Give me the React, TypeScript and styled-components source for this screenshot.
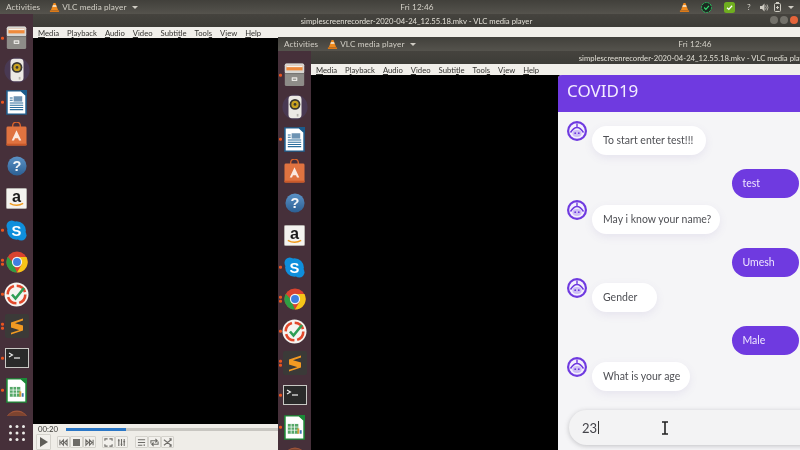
import React from "react";
import styled, { createGlobalStyle } from "styled-components";

const Global = createGlobalStyle`
  html, body { margin: 0; padding: 0; background: #000; overflow: hidden; }
  * { box-sizing: border-box; }
`;

const Frame = styled.div`
  position: relative;
  width: 800px;
  height: 450px;
  overflow: hidden;
  filter: blur(0.3px);
`;

const Screen = styled.div<{ $h: number }>`
  width: 800px;
  height: ${(p) => p.$h}px;
  display: flex;
  flex-direction: column;
  overflow: hidden;
  font-family: Lato, "Noto Sans", sans-serif;
  background: #000;
`;

const NestedSlot = styled.div`
  position: absolute;
  left: 278px;
  top: 37px;
`;

const TopBar = styled.div`
  flex: none;
  height: 14px;
  display: grid;
  grid-template-columns: 1fr auto 1fr;
  align-items: center;
  background: linear-gradient(#41403b, #55534d);
  color: #d2cfc6;
  font-size: 8.2px;
  letter-spacing: 0.1px;
`;

const TopLeft = styled.div`
  display: flex;
  align-items: center;
  padding-left: 6px;
`;

const AppMenu = styled.div`
  display: flex;
  align-items: center;
  gap: 2px;
  margin-left: 9px;
`;

const Caret = styled.span`
  width: 0;
  height: 0;
  margin-left: 3px;
  border-left: 3px solid transparent;
  border-right: 3px solid transparent;
  border-top: 3px solid #cfccc3;
`;

const Clock = styled.div`
  margin-left: 34px;
`;

const Tray = styled.div`
  display: flex;
  align-items: center;
  justify-content: flex-end;
  padding-right: 5px;
`;

const TraySlot = styled.span<{ $w: number }>`
  width: ${(p) => p.$w}px;
  display: flex;
  justify-content: center;
  align-items: center;
`;

const Body = styled.div`
  flex: 1;
  min-height: 0;
  display: flex;
`;

const Dock = styled.div`
  flex: none;
  width: 33px;
  position: relative;
  display: flex;
  flex-direction: column;
  align-items: center;
  padding-top: 8px;
  background: #46303a;
  overflow: hidden;
`;

const DockItem = styled.div`
  flex: none;
  position: relative;
  width: 33px;
  height: 32px;
  display: flex;
  align-items: center;
  justify-content: center;
`;

const Pips = styled.div`
  position: absolute;
  left: 1px;
  top: 50%;
  transform: translateY(-50%);
  display: flex;
  flex-direction: column;
  gap: 1.5px;
`;

const Pip = styled.span`
  width: 2.5px;
  height: 2.5px;
  border-radius: 50%;
  background: #e9541f;
`;

const AppsButton = styled.div`
  position: absolute;
  left: 0;
  bottom: 0;
  width: 33px;
  height: 34px;
  display: flex;
  align-items: center;
  justify-content: center;
  background: #46303a;
`;

const Window = styled.div`
  flex: 1;
  min-width: 0;
  display: flex;
  flex-direction: column;
`;

const TitleBar = styled.div`
  flex: none;
  position: relative;
  height: 13px;
  display: flex;
  align-items: center;
  justify-content: center;
  background: linear-gradient(#45433e, #3d3c37);
  color: #e2dfd6;
  font-size: 7.7px;
  white-space: nowrap;
`;

const WinButtons = styled.div`
  position: absolute;
  right: 2px;
  top: 2px;
  display: flex;
  gap: 2px;
`;

const WinButton = styled.span<{ $close?: boolean }>`
  width: 8px;
  height: 8px;
  border-radius: 50%;
  background: ${(p) => (p.$close ? "#e5643a" : "#73716a")};
`;

const MenuBar = styled.div`
  flex: none;
  height: 11px;
  padding: 1px 0 0 5px;
  display: flex;
  align-items: center;
  gap: 8px;
  background: #f1efea;
  color: #33322f;
  font-size: 7.7px;
  line-height: 10px;
`;

const MenuLabel = styled.span`
  white-space: nowrap;
`;

const Content = styled.div`
  flex: 1;
  min-height: 0;
  display: flex;
`;

const OuterVideo = styled.div`
  flex: 1;
  display: flex;
  flex-direction: column;
`;

const Video = styled.div<{ $w?: number }>`
  flex: ${(p) => (p.$w ? `none` : 1)};
  width: ${(p) => (p.$w ? `${p.$w}px` : "auto")};
  background: #000;
`;

const Controls = styled.div`
  flex: none;
  height: 26px;
  background: #efede8;
  color: #3a3936;
`;

const SeekRow = styled.div`
  height: 10px;
  display: flex;
  align-items: center;
  padding-left: 5px;
  font-size: 7.8px;
`;

const Seek = styled.div`
  flex: 1;
  height: 3px;
  margin-left: 8px;
  background: #c8c6c1;
`;

const SeekFill = styled.div`
  width: 60px;
  height: 100%;
  background: #2a76c6;
`;

const ButtonRow = styled.div`
  height: 16px;
  display: flex;
  align-items: center;
  padding-left: 3px;
`;

const CtlGroup = styled.div<{ $gap: number }>`
  display: flex;
  margin-left: ${(p) => p.$gap}px;
`;

const CtlButton = styled.div<{ $w?: number }>`
  width: ${(p) => p.$w ?? 13}px;
  height: ${(p) => (p.$w ? 16 : 12)}px;
  display: flex;
  align-items: center;
  justify-content: center;
  background: #f2f0ec;
  border: 1px solid #d4d2cc;
  border-radius: 1px;
`;

const Chat = styled.div`
  flex: none;
  width: 242px;
  display: flex;
  flex-direction: column;
  margin-left: 1px;
  background: #f5f5f7;
  border-top-left-radius: 4px;
  overflow: hidden;
`;

const ChatHeader = styled.div`
  flex: none;
  height: 37px;
  display: flex;
  align-items: center;
  padding: 0 0 6px 9px;
  background: #6f3ae0;
  color: #f3ecff;
  font-family: "Noto Sans", sans-serif;
  font-size: 17px;
`;

const Messages = styled.div`
  flex: 1;
  display: flex;
  flex-direction: column;
  padding: 7.75px 1.5px 0 9px;
`;

const BotRow = styled.div`
  display: flex;
  align-items: flex-start;
  margin-top: 1.25px;
`;

const BotBubble = styled.div<{ $w: number }>`
  width: ${(p) => p.$w}px;
  height: 29px;
  margin-top: 5px;
  margin-left: 5px;
  display: flex;
  align-items: center;
  padding: 0 0 1px 11px;
  border-radius: 15px;
  background: #fff;
  color: #4f5055;
  font-size: 10.5px;
  box-shadow: 0 3px 8px rgba(110, 90, 170, 0.1);
  white-space: nowrap;
`;

const UserBubble = styled.div`
  align-self: flex-end;
  width: 67px;
  height: 29px;
  margin-top: 14.25px;
  display: flex;
  align-items: center;
  padding: 0 0 1px 11px;
  border-radius: 15px;
  background: #6f3ae0;
  color: #efe6ff;
  font-size: 10.5px;
`;

const InputBar = styled.div`
  flex: none;
  position: relative;
  height: 35px;
  margin: 0 -30px 5px 11px;
  display: flex;
  align-items: center;
  padding-left: 13px;
  border-radius: 18px;
  background: #f3f3f4;
  box-shadow: 0 1px 5px rgba(60, 60, 70, 0.28);
  color: #44444a;
  font-size: 13px;
`;

const Caretline = styled.span`
  width: 1px;
  height: 13px;
  margin-left: 1px;
  background: #333;
`;

const IBeam = styled.svg`
  position: absolute;
  left: 92px;
  top: 10.5px;
`;

/* ---------- drawings ---------- */

const Cone = ({ s = 11 }: { s?: number }) => (
  <svg width={s} height={s} viewBox="0 0 12 12">
    <path d="M5 1h2l3 8H2z" fill="#f08a1d" />
    <path d="M4.3 3.6h3.4l.6 1.7H3.7z" fill="#f5f0e8" />
    <path d="M1 9.2h10v1.6H1z" fill="#ee7f12" />
  </svg>
);

const Files = () => (
  <svg width="21" height="24" viewBox="0 0 26 26" preserveAspectRatio="none">
    <rect x="1" y="0.5" width="24" height="24.5" rx="2" fill="#8e8c88" />
    <rect x="1" y="0.5" width="24" height="11" rx="2" fill="#d8d6d2" />
    <rect x="3" y="3" width="20" height="5" fill="#ee8a3c" />
    <rect x="3" y="3" width="20" height="1.5" fill="#f7f3ea" />
    <rect x="1" y="11" width="24" height="1" fill="#6d6b68" />
    <rect x="9.5" y="15.5" width="7" height="4" rx="0.5" fill="#e8e6e2" />
    <rect x="11" y="17" width="4" height="1" fill="#77756f" />
  </svg>
);

const Rhythmbox = () => (
  <svg width="26" height="26" viewBox="0 0 30 30">
    <circle cx="15" cy="15" r="14.5" fill="#4d4168" opacity="0.55" />
    <rect x="7.5" y="2" width="15" height="26" rx="4" fill="#ece9e4" />
    <circle cx="15" cy="12" r="6.2" fill="#3a3833" />
    <circle cx="15" cy="12" r="4.2" fill="#c9a21f" />
    <circle cx="15" cy="12" r="1.6" fill="#3a3833" />
    <rect x="17" y="23" width="2" height="3" fill="#b5b2ac" />
  </svg>
);

const Writer = () => (
  <svg width="21" height="25" viewBox="0 0 22 28" preserveAspectRatio="none">
    <path d="M1 1h15l5 5v21H1z" fill="#fff" stroke="#1f5f8f" strokeWidth="1.6" />
    <path d="M15 0l7 7V0z" fill="#1b5b8b" />
    <rect x="8" y="7" width="9" height="6" fill="#6d93b3" />
    <path d="M4 9h3M4 11.5h3M4 14.5h14M4 17h14M4 19.5h14M4 22h14" stroke="#2a6d9c" strokeWidth="1.2" />
  </svg>
);

const Software = () => (
  <svg width="21" height="24" viewBox="0 0 22 26" preserveAspectRatio="none">
    <path d="M7 6V4a4 4 0 0 1 8 0v2" fill="none" stroke="#d9622a" strokeWidth="1.5" />
    <rect x="0.5" y="5" width="21" height="20.5" rx="1.5" fill="#e07340" />
    <path d="M11 9l5 11h-2.4L12.6 17.5H9.4L8.4 20H6z" fill="#fbe9df" />
    <rect x="0.5" y="23.5" width="21" height="2" fill="#c9592a" />
  </svg>
);

const Help = () => (
  <svg width="20" height="20" viewBox="0 0 22 22">
    <defs>
      <linearGradient id="hg" x1="0" y1="0" x2="0" y2="1">
        <stop offset="0" stopColor="#5b92c6" />
        <stop offset="1" stopColor="#2c5f93" />
      </linearGradient>
    </defs>
    <circle cx="11" cy="11" r="10.5" fill="url(#hg)" />
    <text x="11" y="16.5" textAnchor="middle" fontFamily="Liberation Sans, sans-serif" fontSize="16" fontWeight="700" fill="#f4f6f8">?</text>
  </svg>
);

const Amazon = () => (
  <svg width="21" height="21" viewBox="0 0 22 22">
    <rect x="0.5" y="0.5" width="21" height="21" rx="1" fill="#f4f3ef" stroke="#b7b5b0" />
    <text x="11" y="14.5" textAnchor="middle" fontFamily="Liberation Sans, sans-serif" fontSize="17" fontWeight="700" fill="#1a1a1a">a</text>
    <path d="M4 16q7 4.2 14 .2" fill="none" stroke="#ee9a1d" strokeWidth="1.5" />
  </svg>
);

const Skype = () => (
  <svg width="21" height="21" viewBox="0 0 22 22">
    <circle cx="6" cy="6" r="5.5" fill="#0f8fdc" />
    <circle cx="16" cy="16" r="5.5" fill="#0f8fdc" />
    <circle cx="11" cy="11" r="9.8" fill="#0f8fdc" />
    <text x="11" y="16.5" textAnchor="middle" fontFamily="Liberation Sans, sans-serif" fontSize="15.5" fontWeight="700" fill="#fff">S</text>
  </svg>
);

const Chrome = () => (
  <svg width="22" height="22" viewBox="0 0 24 24">
    <circle cx="12" cy="12" r="11.5" fill="#d9432f" />
    <path d="M2 17.8A11.5 11.5 0 0 1 2 6.2L7 12l5 11.5A11.5 11.5 0 0 1 2 17.8z" fill="#2f9e44" />
    <path d="M12 6.5h10.3A11.5 11.5 0 0 1 12 23.5l5-8.5z" fill="#f5c518" />
    <circle cx="12" cy="12" r="5.6" fill="#f4f4f4" />
    <circle cx="12" cy="12" r="4.3" fill="#3f7fe0" />
  </svg>
);

const CheckApp = () => (
  <svg width="25" height="25" viewBox="0 0 25 25">
    <circle cx="12.5" cy="12.5" r="12" fill="#f6f4f0" />
    <circle cx="12.5" cy="12.5" r="8.8" fill="none" stroke="#e2492c" strokeWidth="2.6" strokeDasharray="11 2.8" />
    <path d="M8 12.5l3.5 4L20 6" fill="none" stroke="#2f9e54" strokeWidth="2.6" />
  </svg>
);

const Sublime = () => (
  <svg width="24" height="24" viewBox="0 0 24 24">
    <rect width="24" height="24" rx="2" fill="#3b3a38" />
    <path d="M18 4.5L6 8.5v5L14 16v.2L6 18.8v1.7L18 16.5v-5L10 9.2 18 6.5z" fill="#f29a22" />
  </svg>
);

const Terminal = () => (
  <svg width="24" height="20" viewBox="0 0 24 20">
    <rect x="0.5" y="0.5" width="23" height="19" fill="#2a2a2a" stroke="#c9c8c4" />
    <path d="M4 5l3.5 2L4 9" fill="none" stroke="#f1f1f1" strokeWidth="1.1" />
    <path d="M9 10h6" stroke="#f1f1f1" strokeWidth="1.2" />
  </svg>
);

const Calc = () => (
  <svg width="21" height="25" viewBox="0 0 22 28" preserveAspectRatio="none">
    <path d="M1 1h15l5 5v21H1z" fill="#fff" stroke="#1d8a36" strokeWidth="1.6" />
    <path d="M15 0l7 7V0z" fill="#1b8a38" />
    <rect x="4" y="10" width="11" height="11" fill="#55a868" />
    <path d="M4 13.5h11M4 17h11M7.5 10v11M11 10v11" stroke="#fff" strokeWidth="0.8" />
    <rect x="14" y="15" width="2" height="6" fill="#d9a13a" />
    <rect x="16.5" y="17" width="2" height="4" fill="#3d76b5" />
  </svg>
);

const Brown = () => (
  <svg width="24" height="24" viewBox="0 0 24 24">
    <circle cx="12" cy="12" r="11.5" fill="#a0553a" />
    <path d="M1 9a12 12 0 0 1 22 0z" fill="#7d4430" />
  </svg>
);

const AppsGrid = () => (
  <svg width="16" height="16" viewBox="0 0 16 16" fill="#ecebe8">
    {[1.5, 8, 14.5].map((y) =>
      [1.5, 8, 14.5].map((x) => <circle key={`${x}-${y}`} cx={x} cy={y} r="1.5" />)
    )}
  </svg>
);

const Avatar = () => (
  <svg width="20" height="20" viewBox="0 0 20 20">
    <circle cx="10" cy="10" r="10" fill="#6f3ae0" />
    <circle cx="10" cy="10" r="7.8" fill="#f4f0fd" />
    <path d="M10 2.5v3.5M3.5 11.5Q10 1.5 16.5 11.5" stroke="#6f3ae0" strokeWidth="1.4" fill="none" />
    <ellipse cx="10" cy="12.5" rx="4.6" ry="3.4" fill="#cdbdf5" />
    <circle cx="8.2" cy="12.2" r="0.9" fill="#6f3ae0" />
    <circle cx="11.8" cy="12.2" r="0.9" fill="#6f3ae0" />
  </svg>
);

const Ic = ({ d, w = 9 }: { d: string; w?: number }) => (
  <svg width={w} height={w} viewBox="0 0 10 10" fill="none" stroke="#6d6b67" strokeWidth="1.2">
    <path d={d} />
  </svg>
);

/* ---------- data ---------- */

const dockIcons: { node: React.ReactNode; pips: number }[] = [
  { node: <Files />, pips: 1 },
  { node: <Rhythmbox />, pips: 0 },
  { node: <Writer />, pips: 1 },
  { node: <Software />, pips: 0 },
  { node: <Help />, pips: 0 },
  { node: <Amazon />, pips: 0 },
  { node: <Skype />, pips: 1 },
  { node: <Chrome />, pips: 2 },
  { node: <CheckApp />, pips: 1 },
  { node: <Sublime />, pips: 2 },
  { node: <Terminal />, pips: 1 },
  { node: <Calc />, pips: 1 },
  { node: <Brown />, pips: 0 },
];

const menus: [string, string, string][] = [
  ["", "M", "edia"],
  ["P", "l", "ayback"],
  ["", "A", "udio"],
  ["", "V", "ideo"],
  ["Subti", "t", "le"],
  ["Tool", "s", ""],
  ["V", "i", "ew"],
  ["", "H", "elp"],
];

const TITLE = "simplescreenrecorder-2020-04-24_12.55.18.mkv - VLC media player";

/* ---------- composed parts ---------- */

const Desktop = ({ h, showApps, tray, winButtons, children }: {
  h: number;
  showApps?: boolean;
  tray?: boolean;
  winButtons?: boolean;
  children: React.ReactNode;
}) => (
  <Screen $h={h}>
    <TopBar>
      <TopLeft>
        <span>Activities</span>
        <AppMenu>
          <Cone />
          <span>VLC media player</span>
          <Caret />
        </AppMenu>
      </TopLeft>
      <Clock>Fri 12:46</Clock>
      {tray ? (
        <Tray>
          <TraySlot $w={22}><Cone /></TraySlot>
          <TraySlot $w={23}>
            <svg width="11" height="11" viewBox="0 0 11 11">
              <circle cx="5.5" cy="5.5" r="5" fill="#1c2a22" stroke="#27c45e" strokeWidth="1" strokeDasharray="2 1" />
              <path d="M3.2 5.5l1.7 1.8 3-3.4" fill="none" stroke="#35e070" strokeWidth="1.2" />
            </svg>
          </TraySlot>
          <TraySlot $w={23}>
            <svg width="11" height="11" viewBox="0 0 11 11">
              <rect width="11" height="11" rx="2.5" fill="#6fae1f" />
              <path d="M3 5.7l1.8 1.7 3.3-3.6" fill="none" stroke="#fff" strokeWidth="1.3" />
            </svg>
          </TraySlot>
          <TraySlot $w={16}>?</TraySlot>
          <TraySlot $w={14}>
            <svg width="9" height="9" viewBox="0 0 9 9" fill="#cfccc3">
              <path d="M0 3h2l2.5-2.5v8L2 6H0z" />
              <path d="M5.5 2.5q1.5 2 0 4M7 1.5q2 3 0 6" fill="none" stroke="#cfccc3" strokeWidth="0.8" />
            </svg>
          </TraySlot>
          <TraySlot $w={13}>
            <svg width="7" height="10" viewBox="0 0 7 10">
              <rect x="0.5" y="1.5" width="6" height="8" rx="1" fill="none" stroke="#cfccc3" />
              <rect x="2" y="0" width="3" height="1.5" fill="#cfccc3" />
              <path d="M2 5.5h3M3.5 4v3" stroke="#cfccc3" />
            </svg>
          </TraySlot>
          <TraySlot $w={11}><Caret /></TraySlot>
        </Tray>
      ) : <span />}
    </TopBar>
    <Body>
      <Dock>
        {dockIcons.map((ic, i) => (
          <DockItem key={i}>
            <Pips>
              {Array.from({ length: ic.pips }).map((_, j) => <Pip key={j} />)}
            </Pips>
            {ic.node}
          </DockItem>
        ))}
        {showApps && <AppsButton><AppsGrid /></AppsButton>}
      </Dock>
      <Window>
        <TitleBar>
          {TITLE}
          {winButtons && (
            <WinButtons>
              <WinButton />
              <WinButton />
              <WinButton $close />
            </WinButtons>
          )}
        </TitleBar>
        <MenuBar>
          {menus.map(([a, b, c]) => (
            <MenuLabel key={a + b + c}>{a}<u>{b}</u>{c}</MenuLabel>
          ))}
        </MenuBar>
        <Content>{children}</Content>
      </Window>
    </Body>
  </Screen>
);

const Bot = ({ text, w }: { text: string; w: number }) => (
  <BotRow>
    <Avatar />
    <BotBubble $w={w}>{text}</BotBubble>
  </BotRow>
);

const ChatPanel = () => (
  <Chat>
    <ChatHeader>COVID19</ChatHeader>
    <Messages>
      <Bot text="To start enter test!!!" w={114} />
      <UserBubble>test</UserBubble>
      <Bot text="May i know your name?" w={128} />
      <UserBubble>Umesh</UserBubble>
      <Bot text="Gender" w={65} />
      <UserBubble>Male</UserBubble>
      <Bot text="What is your age" w={98} />
    </Messages>
    <InputBar>
      23<Caretline />
      <IBeam width="8" height="14" viewBox="0 0 8 14">
        <path d="M1 1h6M1 13h6M4 1v12" stroke="#222" strokeWidth="1.6" fill="none" />
      </IBeam>
    </InputBar>
  </Chat>
);

const Transport = () => (
  <Controls>
    <SeekRow>
      00:20
      <Seek><SeekFill /></Seek>
    </SeekRow>
    <ButtonRow>
      <CtlButton $w={15}>
        <svg width="9" height="10" viewBox="0 0 9 10"><path d="M1 0l8 5-8 5z" fill="#5f5d59" /></svg>
      </CtlButton>
      <CtlGroup $gap={6}>
        <CtlButton><Ic d="M1 2v6M9 2v6M5 2L2 5l3 3zM9 2L6 5l3 3z" /></CtlButton>
        <CtlButton><svg width="7" height="7"><rect width="7" height="7" fill="#6d6b67" /></svg></CtlButton>
        <CtlButton><Ic d="M1 2v6M9 2v6M1 2l3 3-3 3zM5 2l3 3-3 3z" /></CtlButton>
      </CtlGroup>
      <CtlGroup $gap={6}>
        <CtlButton><Ic d="M1 3V1h3M6 1h3v2M9 7v2H6M4 9H1V7" /></CtlButton>
        <CtlButton><Ic d="M2 1v8M5 1v8M8 1v8M1 3h2M4 7h2M7 4h2" /></CtlButton>
      </CtlGroup>
      <CtlGroup $gap={7}>
        <CtlButton><Ic d="M1 2h8M1 5h8M1 8h5M8 7v2" /></CtlButton>
        <CtlButton><Ic d="M1 6V3h7M6 1l2 2-2 2M9 4v3H2M4 9L2 7l2-2" /></CtlButton>
        <CtlButton><Ic d="M1 2l8 6M1 8l8-6M7 1h2v2M7 9h2V7" /></CtlButton>
      </CtlGroup>
    </ButtonRow>
  </Controls>
);

export default function App() {
  return (
    <Frame>
      <Global />
      <Desktop h={450} showApps tray winButtons>
        <OuterVideo>
          <Video />
          <Transport />
        </OuterVideo>
      </Desktop>
      <NestedSlot>
        <Desktop h={413}>
          <Video $w={246} />
          <ChatPanel />
        </Desktop>
      </NestedSlot>
    </Frame>
  );
}
